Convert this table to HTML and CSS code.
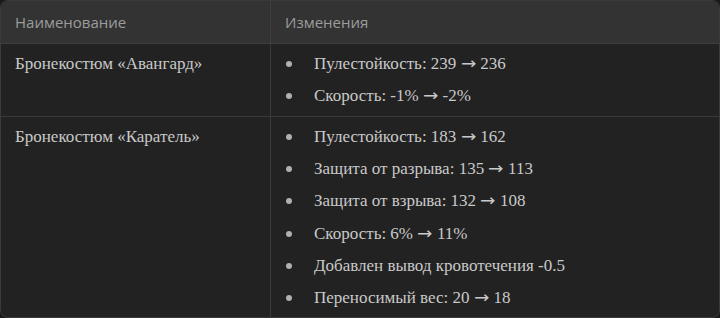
FILE: index.html
```html
<!DOCTYPE html>
<html lang="ru">
<head>
<meta charset="utf-8">
<link rel="stylesheet" href="styles.css">
</head>
<body>
<div class="tbl">
  <div class="th">Наименование</div>
  <div class="th th-last">Изменения</div>

  <div class="td name">Бронекостюм «Авангард»</div>
  <div class="td td-last">
    <ul class="list">
      <li>Пулестойкость: 239 <span class="arr">→</span> 236</li>
      <li>Скорость: -1% <span class="arr">→</span> -2%</li>
    </ul>
  </div>

  <div class="td name row-last">Бронекостюм «Каратель»</div>
  <div class="td td-last row-last">
    <ul class="list">
      <li>Пулестойкость: 183 <span class="arr">→</span> 162</li>
      <li>Защита от разрыва: 135 <span class="arr">→</span> 113</li>
      <li>Защита от взрыва: 132 <span class="arr">→</span> 108</li>
      <li>Скорость: 6% <span class="arr">→</span> 11%</li>
      <li>Добавлен вывод кровотечения -0.5</li>
      <li>Переносимый вес: 20 <span class="arr">→</span> 18</li>
    </ul>
  </div>
</div>
</body>
</html>
```

FILE: styles.css
```css
html, body {
  margin: 0;
  padding: 0;
  background: #1b1b1b;
}
.tbl {
  width: 720px;
  height: 318px;
  box-sizing: border-box;
  display: grid;
  grid-template-columns: 270px 1fr;
  grid-template-rows: 43px 73px 1fr;
  border: 1px solid #3a3a3a;
  border-radius: 8px;
  overflow: hidden;
  background: #222222;
}
.th {
  background: #333333;
  color: #9c9c9c;
  font-family: "Open Sans", "Noto Sans", sans-serif;
  font-size: 15px;
  display: flex;
  align-items: center;
  padding: 0 14px;
  border-bottom: 1px solid #3f3f3f;
  border-right: 1px solid #3f3f3f;
}
.th-last { border-right: none; }
.td {
  padding: 8px 14px;
  border-right: 1px solid #3a3a3a;
  border-bottom: 1px solid #3a3a3a;
  color: #c9c9c9;
  font-family: "Liberation Serif", serif;
  font-size: 17px;
  line-height: 24px;
}
.td-last { border-right: none; }
.row-last { border-bottom: none; }
.list {
  list-style: none;
  margin: 0;
  padding: 0;
  display: flex;
  flex-direction: column;
  gap: 8.2px;
}
.list li {
  display: flex;
  align-items: center;
  padding-left: 1px;
  white-space: pre;
}
.list li::before {
  content: "";
  width: 6px;
  height: 6px;
  border-radius: 50%;
  background: #b0b0b0;
  flex: none;
  margin-right: 22px;
}
.arr {
  font-family: "DejaVu Sans", sans-serif;
  font-size: 16px;
  transform: scaleX(1.15);
  display: inline-block;
  margin: 0 1px;
}
```
